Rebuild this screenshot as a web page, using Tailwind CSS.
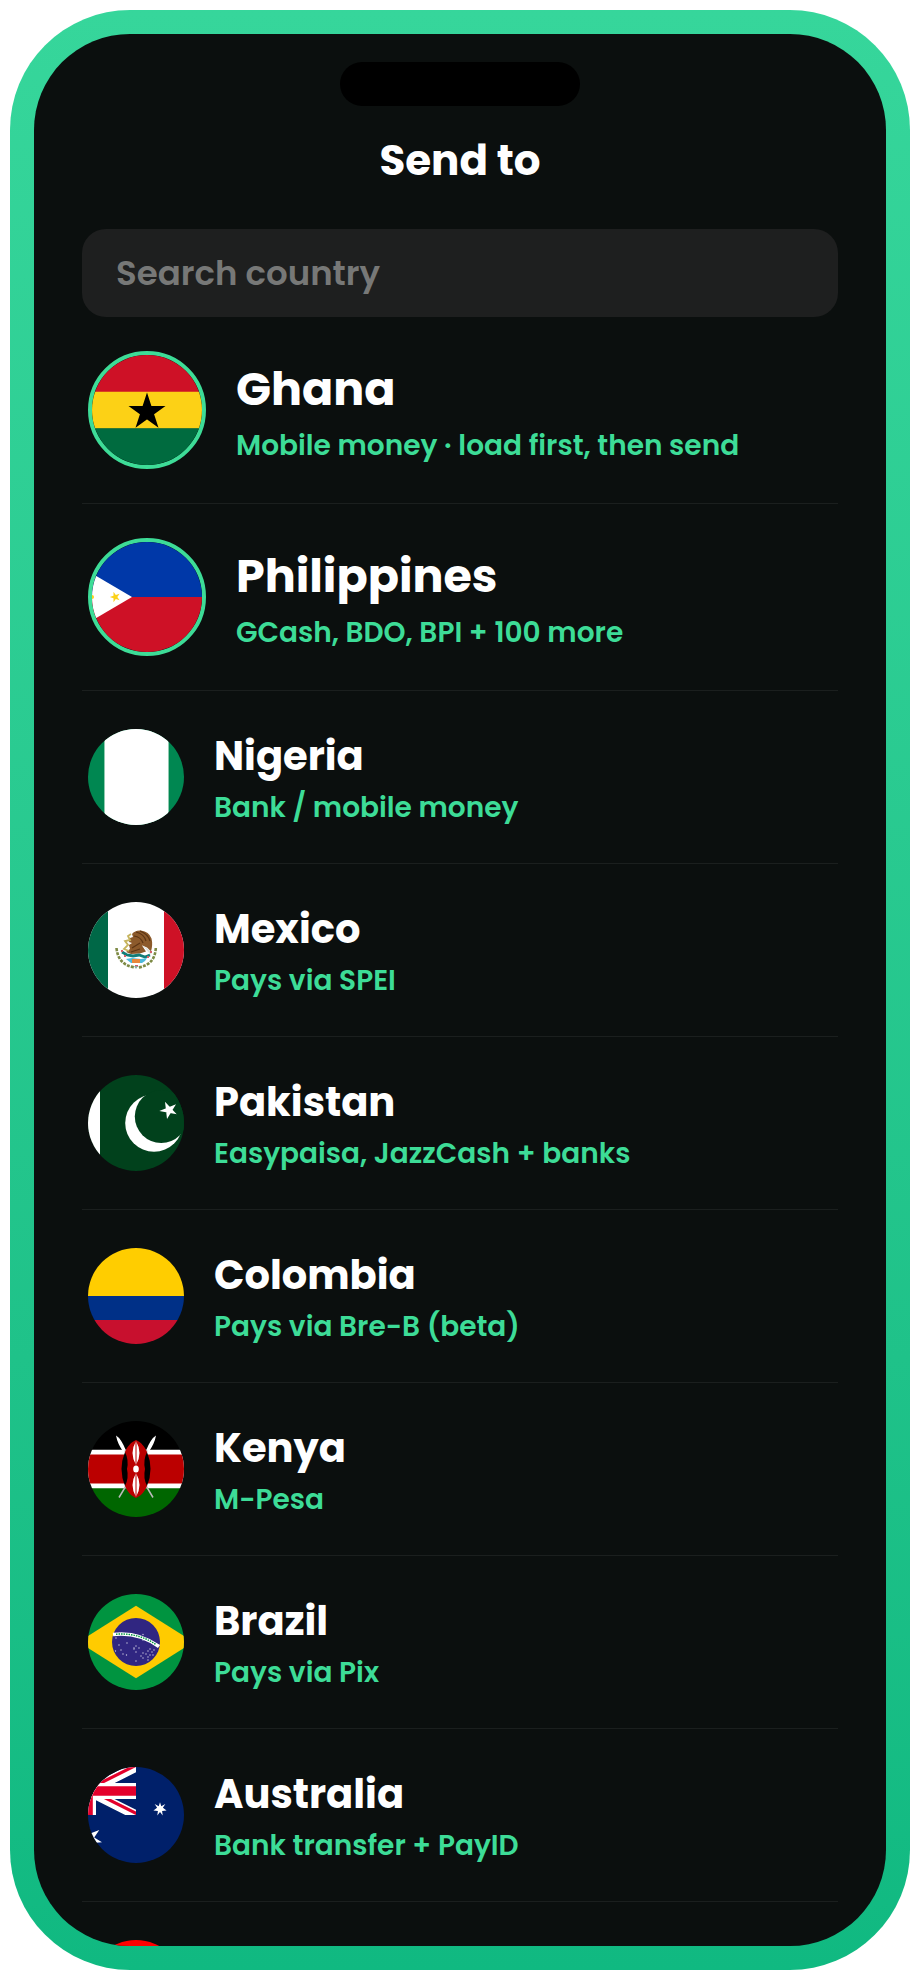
<!DOCTYPE html>
<html lang="en">
<head>
  <meta charset="UTF-8">
  <meta name="viewport" content="width=device-width, initial-scale=1">
  <title>Send to</title>
  <script src="https://cdn.jsdelivr.net/npm/@tailwindcss/browser@4"></script>
</head>
<body class="bg-white p-[10px] h-screen font-['Poppins','Inter',sans-serif]">

<!-- Phone frame -->
<div class="h-full p-6 rounded-[120px] bg-linear-to-b from-[#36d69b] to-[#10b981]">
  <main class="h-full overflow-hidden rounded-[96px] bg-[#0b0f0e] px-12 pt-7 flex flex-col">

    <div class="w-60 h-11 shrink-0 rounded-full bg-black mx-auto"></div>

    <h1 class="mt-[27px] text-[42px] leading-[56px] font-bold text-white text-center">Send to</h1>

    <input class="mt-10 w-full h-[88px] shrink-0 rounded-3xl bg-[#1e1f1f] px-[34px] text-[34px] font-semibold text-white placeholder:text-[#777877] focus:outline-none"
           type="text"
           aria-label="Search country"
           placeholder="Search country">

    <ul class="divide-y divide-[#1b1f1e]">

      <li>
        <button class="w-full flex items-center gap-[30px] px-1.5 py-[34px] text-left">
          <svg class="size-[118px] shrink-0 rounded-full border-4 border-[#3ddc97]" viewBox="0 0 110 110">
            <path fill="#ce1126" d="M0 0h110v37H0z"/>
            <path fill="#fcd116" d="M0 36.7h110v37H0z"/>
            <path fill="#006b3f" d="M0 73.3h110V110H0z"/>
            <path d="M55 37.5 66.5 72.8 36.5 51h37L43.5 72.8z"/>
          </svg>
          <span class="flex flex-col gap-[11px]">
            <span class="text-[46px] leading-[60px] font-bold text-white">Ghana</span>
            <span class="text-[28px] leading-8 font-semibold text-[#3ddc97]">Mobile money · load first, then send</span>
          </span>
        </button>
      </li>

      <li>
        <button class="w-full flex items-center gap-[30px] px-1.5 py-[34px] text-left">
          <svg class="size-[118px] shrink-0 rounded-full border-4 border-[#3ddc97]" viewBox="0 0 110 110">
            <path fill="#0038a8" d="M0 0h110v55H0z"/>
            <path fill="#ce1126" d="M0 55h110v55H0z"/>
            <path fill="#fff" d="M0 31.6 40 55 0 78.4z"/>
            <path fill="#fcd116" d="m21.5 49.8 2.3 3.2 3.8-1.2-2.3 3.2 2.3 3.2-3.8-1.2-2.3 3.2v-4l-3.7-1.2 3.7-1.2z"/>
            <circle cx="0" cy="55" r="2" fill="#fcd116"/>
          </svg>
          <span class="flex flex-col gap-[11px]">
            <span class="text-[46px] leading-[60px] font-bold text-white">Philippines</span>
            <span class="text-[28px] leading-8 font-semibold text-[#3ddc97]">GCash, BDO, BPI + 100 more</span>
          </span>
        </button>
      </li>

      <li>
        <button class="w-full flex items-center gap-[30px] px-1.5 py-[38px] text-left">
          <svg class="size-24 shrink-0 rounded-full" viewBox="0 0 96 96">
            <path fill="#008751" d="M0 0h96v96H0z"/>
            <path fill="#8fcab0" d="M16 0h65v96H16z"/>
            <path fill="#fff" d="M17 0h63v96H17z"/>
          </svg>
          <span class="flex flex-col gap-[11px]">
            <span class="text-[40px] leading-[50px] font-bold text-white">Nigeria</span>
            <span class="text-[28px] leading-8 font-semibold text-[#3ddc97]">Bank / mobile money</span>
          </span>
        </button>
      </li>

      <li>
        <button class="w-full flex items-center gap-[30px] px-1.5 py-[38px] text-left">
          <svg class="size-24 shrink-0 rounded-full" viewBox="0 0 96 96">
            <path fill="#fff" d="M0 0h96v96H0z"/>
            <path fill="#006847" d="M0 0h20v96H0z"/>
            <path fill="#ce1126" d="M76 0h20v96H76z"/>
            <!-- wreath -->
            <path fill="none" stroke="#7d8a45" stroke-width="2.6" stroke-dasharray="3 1.2" d="M28.500 46Q30 63 47 65.500"/>
            <path fill="none" stroke="#7d8a45" stroke-width="2.6" stroke-dasharray="3 1.2" d="M67.800 46Q67 63 50 65.500"/>
            <!-- eagle -->
            <path fill="#8c5a2b" d="M44 32q3-4 9-3.500 8 1 10.500 8 1.500 6-.5 13l-4-4-5-2 4 6-6 2-9 .5-5-2 4-3-1-4 3-2-3-1 1-4 3-1z"/>
            <path fill="none" stroke="#5c3514" stroke-width="1.200" d="M48 30q8 2 10 9M52 29q8 3 10 10M46 34q7 1 9 7M44 46l8-5M43 50l9-3"/>
            <path fill="none" stroke="#c6b45e" stroke-width="1.800" d="M43 32l-3 2 2 4-5 1 3 4-4 4 5 2"/>
            <path fill="#dfe2dc" d="m54 43 10 7-1 3z"/>
            <path fill="none" stroke="#127d78" stroke-width="2.800" d="M34 50l5 3 6 1 6-1 6 2 5-2"/>
            <path fill="#4db9dc" d="m38 57 6-1 9 1 6-1-2 3-3 2H43z"/>
            <path fill="#e8873b" d="M44 57h8v4h-8z"/>
            <path fill="#d6606a" d="M33 48h2v2h-2zM62 49h2v2h-2zM36 53h2v2h-2zM59 54h2v2h-2zM47 63h3v2h-3z"/>
            <path fill="#89aaa0" d="M46 64h4l-2 3z"/>
          </svg>
          <span class="flex flex-col gap-[11px]">
            <span class="text-[40px] leading-[50px] font-bold text-white">Mexico</span>
            <span class="text-[28px] leading-8 font-semibold text-[#3ddc97]">Pays via SPEI</span>
          </span>
        </button>
      </li>

      <li>
        <button class="w-full flex items-center gap-[30px] px-1.5 py-[38px] text-left">
          <svg class="size-24 shrink-0 rounded-full" viewBox="0 0 96 96">
            <path fill="#01411c" d="M0 0h96v96H0z"/>
            <path fill="#fff" d="M0 0h12v96H0z"/>
            <circle cx="66" cy="48" r="28.800" fill="#fff"/>
            <circle cx="73.200" cy="41.500" r="26.400" fill="#01411c"/>
            <path fill="#fff" d="M71.300 36 88 29.300 79 44 77 26.700 88.700 39.300z"/>
          </svg>
          <span class="flex flex-col gap-[11px]">
            <span class="text-[40px] leading-[50px] font-bold text-white">Pakistan</span>
            <span class="text-[28px] leading-8 font-semibold text-[#3ddc97]">Easypaisa, JazzCash + banks</span>
          </span>
        </button>
      </li>

      <li>
        <button class="w-full flex items-center gap-[30px] px-1.5 py-[38px] text-left">
          <svg class="size-24 shrink-0 rounded-full" viewBox="0 0 96 96">
            <path fill="#ffcd00" d="M0 0h96v48H0z"/>
            <path fill="#003087" d="M0 48h96v24H0z"/>
            <path fill="#c8102e" d="M0 72h96v24H0z"/>
          </svg>
          <span class="flex flex-col gap-[11px]">
            <span class="text-[40px] leading-[50px] font-bold text-white">Colombia</span>
            <span class="text-[28px] leading-8 font-semibold text-[#3ddc97]">Pays via Bre-B (beta)</span>
          </span>
        </button>
      </li>

      <li>
        <button class="w-full flex items-center gap-[30px] px-1.5 py-[38px] text-left">
          <svg class="size-24 shrink-0 rounded-full" viewBox="0 0 96 96">
            <path d="M0 0h96v30H0z"/>
            <path fill="#060" d="M0 66h96v30H0z"/>
            <path fill="#fff" d="M0 28.800h96v38.400H0z"/>
            <path fill="#b00" d="M0 33.600h96v28.800H0z"/>
            <!-- spears -->
            <path stroke="#bbb" stroke-width="1.500" d="M36 28 65 76.500M60 28 31 76.500"/>
            <path fill="#fff" d="M28 14.500q5 3 9.500 14L35.500 31q-6-8-7.500-16.500zM68 14.500q-5 3-9.500 14l2 2.500q6-8 7.500-16.500z"/>
            <!-- shield -->
            <path d="M37 31q-7 17 0 34h22q7-17 0-34z"/>
            <path fill="#b00" d="M48 19c5 2 9 7 11 12q-4 8-2 17-2 9 2 17c-2 5-6 10-11 12-5-2-9-7-11-12q4-8 2-17 2-9-2-17c2-5 6-10 11-12z"/>
            <path fill="#fff" d="M48 20q7 12 0 24-7-12 0-24zM48 52q7 12 0 24-7-12 0-24z"/>
            <path stroke="#b00" d="M48 20v24M48 52v24"/>
            <ellipse cx="48" cy="48" rx="2.800" ry="3.600" fill="#fff"/>
          </svg>
          <span class="flex flex-col gap-[11px]">
            <span class="text-[40px] leading-[50px] font-bold text-white">Kenya</span>
            <span class="text-[28px] leading-8 font-semibold text-[#3ddc97]">M-Pesa</span>
          </span>
        </button>
      </li>

      <li>
        <button class="w-full flex items-center gap-[30px] px-1.5 py-[38px] text-left">
          <svg class="size-24 shrink-0 rounded-full" viewBox="0 0 96 96">
            <path fill="#009440" d="M0 0h96v96H0z"/>
            <path fill="#ffcb00" d="M48 11.700 105.400 48 48 84.300-9.400 48z"/>
            <circle cx="48" cy="48" r="24" fill="#302681"/>
            <path fill="none" stroke="#fff" stroke-width="3.600" d="M25 40.500Q50 37.500 71 52.500"/>
            <path fill="none" stroke="#009440" stroke-width="1.400" stroke-dasharray="1.500 1" d="M28 40.200Q50 38.500 68 50.500"/>
            <path fill="none" stroke="#fff" stroke-width="1.400" stroke-linecap="round" stroke-opacity=".75" d="M55 40.500h0M28 44h0M39 49h0M31 51h0M27.500 57h0M33 56h0M35 60h0M38.500 61h0M46 55h0M48 52h0M51 54h0M48 58h0M46 54h0M55 46h0M53 62h0M55 64h0M58 60h0M60 57h0M62 55h0M64 58h0M66 56h0M65 61h0M60 63h0M62 61h0M60 66h0M55 59h0M48 67h0"/>
          </svg>
          <span class="flex flex-col gap-[11px]">
            <span class="text-[40px] leading-[50px] font-bold text-white">Brazil</span>
            <span class="text-[28px] leading-8 font-semibold text-[#3ddc97]">Pays via Pix</span>
          </span>
        </button>
      </li>

      <li>
        <button class="w-full flex items-center gap-[30px] px-1.5 py-[38px] text-left">
          <svg class="size-24 shrink-0 rounded-full" viewBox="0 0 96 96">
            <clipPath id="canton"><path d="M-48 0h96v48h-96z"/></clipPath>
            <path fill="#00206a" d="M0 0h96v96H0z"/>
            <g clip-path="url(#canton)" fill="none">
              <path stroke="#fff" stroke-width="9.600" d="M-48 0 48 48M-48 48 48 0"/>
              <path stroke="#e4002b" stroke-width="3.200" d="M-.7 22.600 50-2.700M.7 22.600 50 47.300"/>
              <path stroke="#fff" stroke-width="16" d="M0 0v48M-48 24h96"/>
              <path stroke="#e4002b" stroke-width="9.600" d="M0 0v48M-48 24h96"/>
            </g>
            <path fill="#fff" d="M0 57.600 2.800 66.200 11.300 63 6.200 70.600 14 75.200 5 76 6.200 85 0 78.400-6 85V60z"/>
            <path fill="#fff" d="m72 35.200 1.300 4 4-2.200-2.400 3.800 3.700 2.700-4.500.4.600 4.600-2.700-3.600-2.700 3.600.6-4.600-4.500-.4 3.700-2.700-2.400-3.800 4 2.200z"/>
          </svg>
          <span class="flex flex-col gap-[11px]">
            <span class="text-[40px] leading-[50px] font-bold text-white">Australia</span>
            <span class="text-[28px] leading-8 font-semibold text-[#3ddc97]">Bank transfer + PayID</span>
          </span>
        </button>
      </li>

      <!-- next row, cut off by the screen edge -->
      <li>
        <div class="px-1.5 py-[38px]">
          <div class="size-24 rounded-full bg-[#f00]"></div>
        </div>
      </li>

    </ul>
  </main>
</div>

</body>
</html>
